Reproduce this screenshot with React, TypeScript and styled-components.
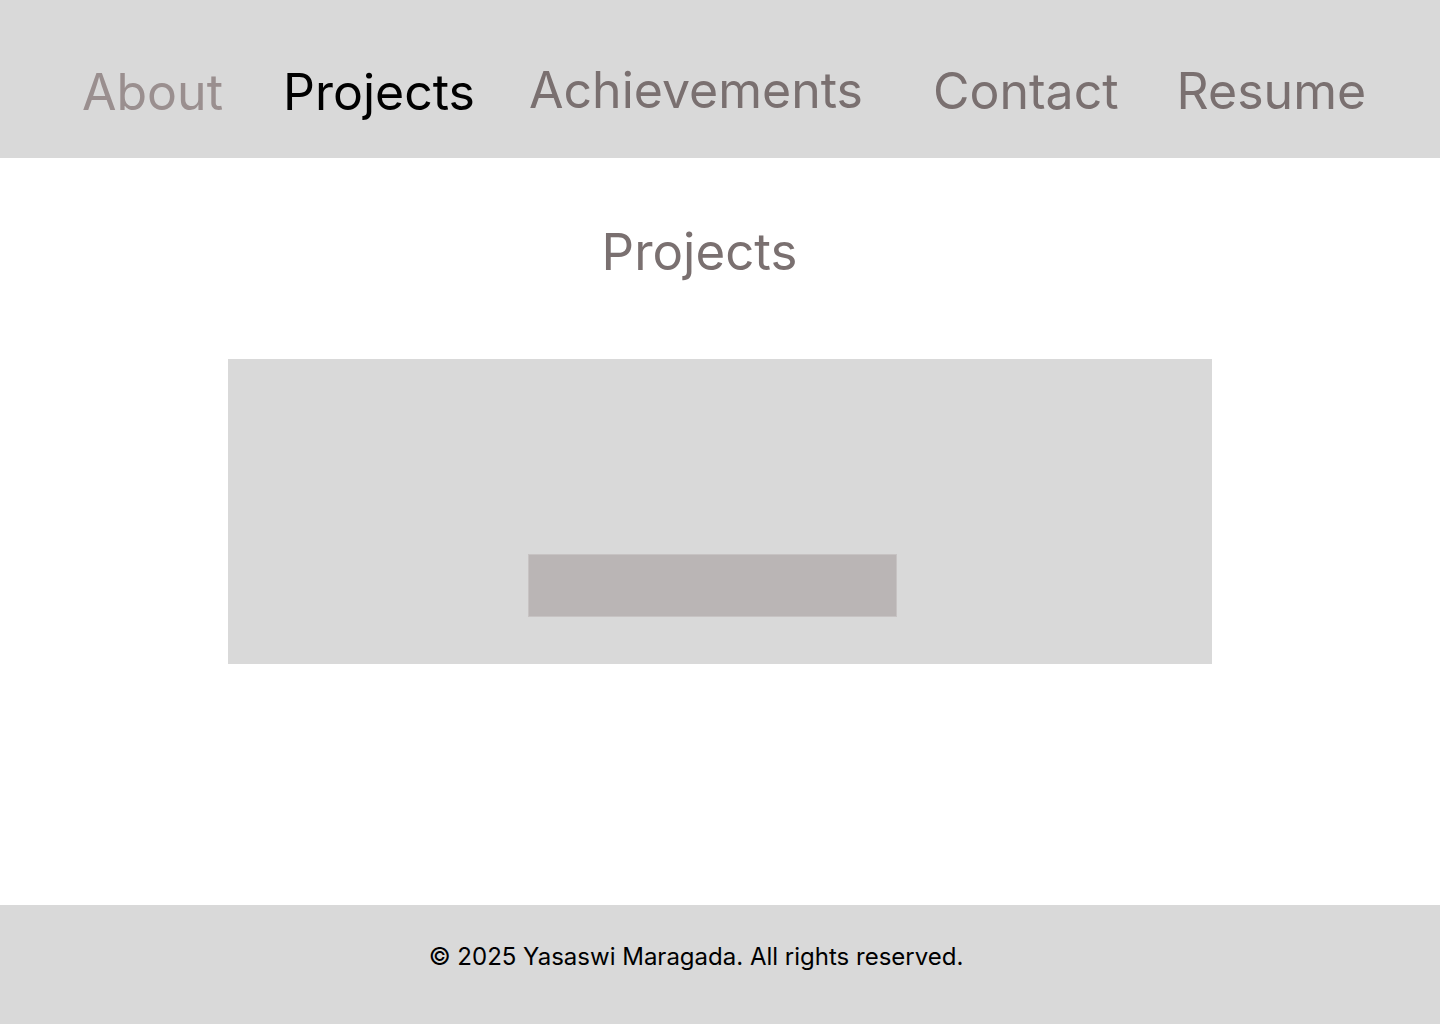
import React from "react";
import styled, { createGlobalStyle } from "styled-components";

const Global = createGlobalStyle`
  html, body { margin: 0; padding: 0; background: #ffffff; }
  body { font-family: Inter, "Liberation Sans", sans-serif; }
  * { box-sizing: border-box; }
`;

const Page = styled.div`
  display: flex;
  flex-direction: column;
  min-height: 1024px;
`;

const Header = styled.header`
  height: 158px;
  background: #d9d9d9;
  display: flex;
  align-items: flex-start;
  padding: 62px 0 0 82px;
`;

const NavItem = styled.a<{ $color: string; $gap: number; $lift?: number }>`
  font-size: 50px;
  line-height: 60px;
  font-weight: 400;
  color: ${(p) => p.$color};
  margin-left: ${(p) => p.$gap}px;
  margin-top: ${(p) => -(p.$lift ?? 0)}px;
  text-decoration: none;
  white-space: nowrap;
`;

const Main = styled.main`
  flex: 1;
  display: flex;
  flex-direction: column;
  align-items: center;
  padding-top: 63px;
`;

const Title = styled.h1`
  margin: 0 0 77px -41px;
  font-size: 51px;
  line-height: 61px;
  font-weight: 400;
  color: #7a7070;
`;

const Card = styled.section`
  width: 984px;
  height: 305px;
  background: #d9d9d9;
  display: flex;
  padding: 195px 0 0 300px;
`;

const CardButton = styled.div`
  width: 369px;
  height: 63px;
  background: #bab5b5;
  border: 1px solid #c7c3c3;
`;

const Footer = styled.footer`
  height: 119px;
  background: #d9d9d9;
  display: flex;
  justify-content: center;
  padding-top: 37px;
`;

const FooterText = styled.p`
  margin: 0 0 0 -48px;
  font-size: 24px;
  line-height: 29px;
  color: #000000;
`;

const navItems = [
  { label: "About", color: "#9a8f8f", gap: 0 },
  { label: "Projects", color: "#000000", gap: 60 },
  { label: "Achievements", color: "#7a7070", gap: 54, lift: 2 },
  { label: "Contact", color: "#7a7070", gap: 70, lift: 1 },
  { label: "Resume", color: "#7a7070", gap: 58, lift: 1 },
];

export default function App() {
  return (
    <Page>
      <Global />
      <Header>
        {navItems.map((n) => (
          <NavItem key={n.label} href="#" $color={n.color} $gap={n.gap} $lift={n.lift}>
            {n.label}
          </NavItem>
        ))}
      </Header>
      <Main>
        <Title>Projects</Title>
        <Card>
          <CardButton />
        </Card>
      </Main>
      <Footer>
        <FooterText>© 2025 Yasaswi Maragada. All rights reserved.</FooterText>
      </Footer>
    </Page>
  );
}
